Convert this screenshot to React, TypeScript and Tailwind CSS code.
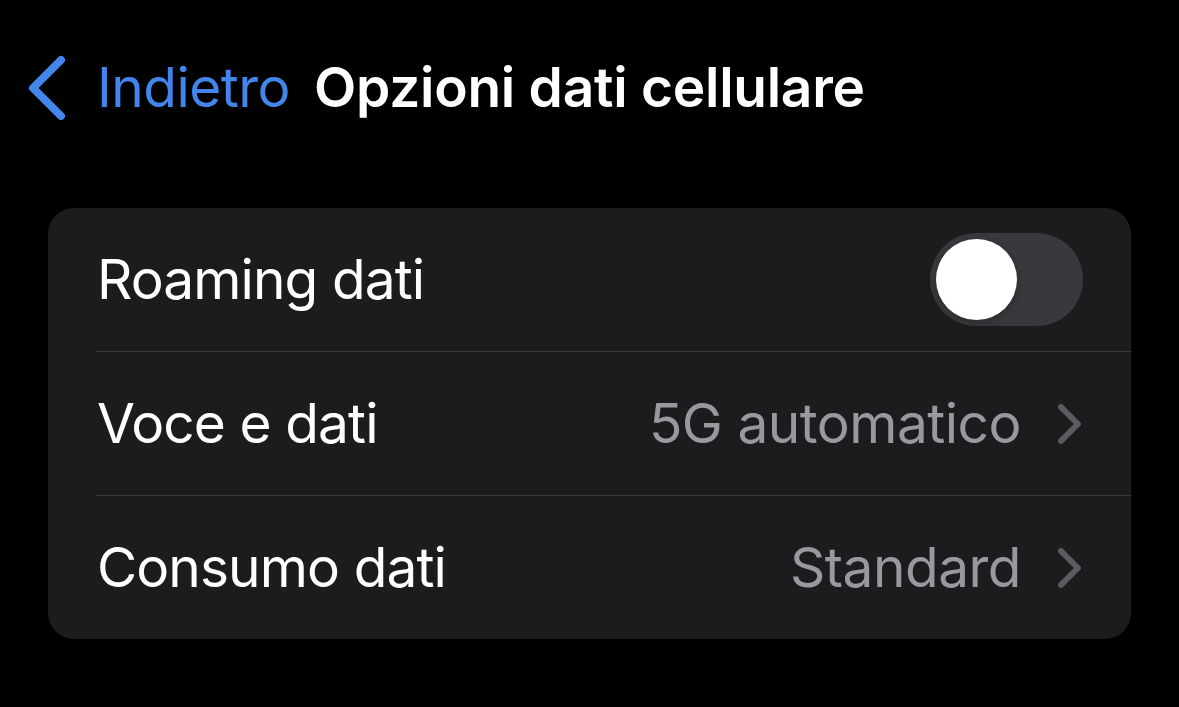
type Row = {
  label: string;
  value?: string;
  toggle?: boolean;
};

const rows: Row[] = [
  { label: 'Roaming dati', toggle: true },
  { label: 'Voce e dati', value: '5G automatico' },
  { label: 'Consumo dati', value: 'Standard' },
];

const Chevron = () => (
  <svg width="26" height="42" viewBox="0 0 26 42" fill="none" className="shrink-0">
    <path d="M4 4 L21 21 L4 38" stroke="#5b5b60" strokeWidth="6" strokeLinecap="round" strokeLinejoin="round" />
  </svg>
);

const Toggle = () => (
  <div className="w-[153px] h-[93px] rounded-full bg-[#39393d] p-[6px] flex items-center">
    <div className="w-[81px] h-[81px] rounded-full bg-white shadow-[0_3px_8px_rgba(0,0,0,0.25)]" />
  </div>
);

export default function App() {
  return (
    <div
      className="w-[1179px] h-[707px] bg-black overflow-hidden"
      style={{ fontFamily: 'Inter, "Noto Sans", sans-serif' }}
    >
      <header className="h-[178px] flex items-start pt-[52px] pl-[22px]">
        <div className="flex items-center">
          <svg width="50" height="70" viewBox="0 0 50 70" fill="none">
            <path d="M39 8 L11 36 L39 64" stroke="#4285ec" strokeWidth="8" strokeLinecap="round" strokeLinejoin="round" />
          </svg>
          <span className="ml-[25px] text-[#4285ec] text-[55px] leading-none tracking-[-0.5px]">Indietro</span>
          <span className="ml-[24px] text-white text-[55px] font-semibold leading-none tracking-[-0.25px]">
            Opzioni dati cellulare
          </span>
        </div>
      </header>
      <div className="mx-[48px] mt-[30px] rounded-[26px] bg-[#1c1c1e] overflow-hidden">
        {rows.map((row, index) => (
          <div key={row.label}>
            {index > 0 && <div className="ml-[48px] h-[1px] bg-[#3a3a3c]" />}
            <div className="h-[143px] flex items-center pl-[49px] pr-[48px]">
              <span className="text-white text-[55px] tracking-[-0.9px] leading-none flex-1">{row.label}</span>
              {row.toggle ? (
                <Toggle />
              ) : (
                <div className="flex items-center gap-[36px]">
                  <span className="text-[#98989f] text-[55px] tracking-[-0.5px] leading-none">{row.value}</span>
                  <Chevron />
                </div>
              )}
            </div>
          </div>
        ))}
      </div>
    </div>
  );
}
